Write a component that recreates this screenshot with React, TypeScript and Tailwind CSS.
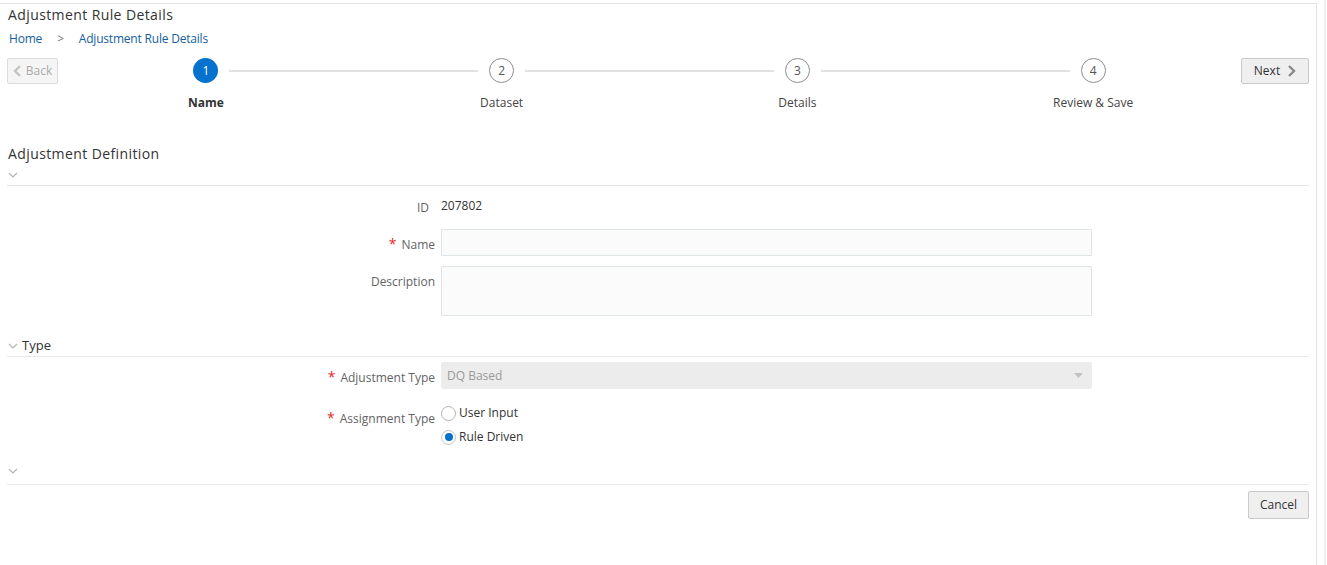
import React from "react"

const steps = ["Name", "Dataset", "Details", "Review & Save"]

const Chevron = ({ dir }: { dir: "left" | "right" }) => (
  <svg width="9" height="12" viewBox="0 0 9 12" className="shrink-0">
    <polyline
      points={dir === "left" ? "7,1 2,6 7,11" : "2,1 7,6 2,11"}
      fill="none"
      stroke={dir === "left" ? "#c4c4c4" : "#8a8a8a"}
      strokeWidth="2.4"
    />
  </svg>
)

const Caret = () => (
  <svg width="10" height="7" viewBox="0 0 10 7" className="shrink-0">
    <polyline points="1,1 5,5 9,1" fill="none" stroke="#b5b5b5" strokeWidth="1.2" />
  </svg>
)

const Label = ({ text, required }: { text: string; required?: boolean }) => (
  <span className="text-[12px] text-[#636363]">
    {required && <span className="mr-[5px] text-[14px] text-[#e0292c]">*</span>}
    {text}
  </span>
)

const App = () => {
  return (
    <div
      className="flex h-[565px] w-[1327px] bg-white text-[#333]"
      style={{ fontFamily: '"Open Sans", "Noto Sans", sans-serif' }}
    >
      <div className="mt-[3px] flex h-[562px] w-[1317px] flex-col border-t border-r border-[#e3e3e3] px-[7px]">
        <div className="mt-[1px] h-[20px] pl-[1px] text-[14px] leading-[20px] tracking-[0.4px] text-[#333]">
          Adjustment Rule Details
        </div>
        <div className="mt-[5px] flex h-[18px] items-center pl-[2px] text-[12px] tracking-[-0.2px] text-[#145e9f]">
          <span>Home</span>
          <span className="mx-[15px] text-[#777]">&gt;</span>
          <span>Adjustment Rule Details</span>
        </div>

        <div className="mt-[10px] flex items-start">
          <button className="flex h-[26px] w-[51px] items-center justify-center gap-[4px] rounded-[2px] border border-[#dcdcdc] bg-[#f5f5f5] text-[12px] text-[#aaa]">
            <Chevron dir="left" />
            Back
          </button>
          <div className="flex flex-1">
            {steps.map((s, i) => (
              <div key={s} className="flex flex-1 flex-col items-center">
                <div className="flex h-[25px] w-full items-center">
                  <div className={`h-[2px] flex-1 ${i === 0 ? "" : "bg-[#e2e2e2]"}`} />
                  {i === 0 ? (
                    <div className="mx-[11px] flex h-[25px] w-[25px] items-center justify-center rounded-full bg-[#0572ce] text-[12px] text-white">
                      1
                    </div>
                  ) : (
                    <div className="mx-[11px] flex h-[25px] w-[25px] items-center justify-center rounded-full border border-[#8d8d8d] bg-white text-[12px] text-[#555]">
                      {i + 1}
                    </div>
                  )}
                  <div className={`h-[2px] flex-1 ${i === steps.length - 1 ? "" : "bg-[#e2e2e2]"}`} />
                </div>
                <div
                  className={`mt-[12px] h-[16px] text-[12px] leading-[16px] ${
                    i === 0 ? "font-bold text-[#333]" : "text-[#444]"
                  }`}
                >
                  {s}
                </div>
              </div>
            ))}
          </div>
          <button className="flex h-[26px] w-[68px] items-center justify-center gap-[7px] rounded-[2px] border border-[#c9c9c9] bg-[#efefef] text-[12px] text-[#333]">
            Next
            <Chevron dir="right" />
          </button>
        </div>

        <div className="mt-[33px] h-[20px] pl-[1px] text-[14px] leading-[20px] tracking-[0.4px] text-[#333]">
          Adjustment Definition
        </div>
        <div className="mt-[6px] flex h-[10px] items-center pl-[1px]">
          <Caret />
        </div>
        <div className="mt-[5px] h-px bg-[#e4e8ea]" />

        <div className="flex flex-col">
          <div className="mt-[10px] flex h-[20px] items-center">
            <div className="w-[434px] pr-[12px] text-right">
              <Label text="ID" />
            </div>
            <div className="text-[12px] text-[#333]">207802</div>
          </div>
          <div className="mt-[13px] flex items-center">
            <div className="w-[434px] pr-[6px] text-right">
              <Label text="Name" required />
            </div>
            <input className="h-[27px] w-[651px] rounded-[1px] border border-[#dfe4e7] bg-[#fbfbfb] px-2 text-[12px] outline-none" />
          </div>
          <div className="mt-[10px] flex items-start">
            <div className="w-[434px] pt-[5px] pr-[6px] text-right leading-[18px]">
              <Label text="Description" />
            </div>
            <textarea className="h-[50px] w-[651px] resize-none rounded-[1px] border border-[#dfe4e7] bg-[#fbfbfb] px-2 text-[12px] outline-none" />
          </div>
        </div>

        <div className="mt-[21px] flex h-[18px] items-center gap-[4px] pl-[1px]">
          <Caret />
          <span className="text-[13px] text-[#333]">Type</span>
        </div>
        <div className="mt-[1px] h-px bg-[#e4e8ea]" />

        <div className="mt-[5px] flex items-center">
          <div className="w-[434px] pr-[6px] text-right">
            <Label text="Adjustment Type" required />
          </div>
          <div className="flex h-[27px] w-[651px] items-center justify-between rounded-[2px] bg-[#ececec] pr-[9px] pl-[6px] text-[12px] text-[#9a9a9a]">
            DQ Based
            <svg width="9" height="6" viewBox="0 0 9 6">
              <polygon points="0,0 9,0 4.5,5" fill="#c2c2c2" />
            </svg>
          </div>
        </div>

        <div className="mt-[15px] flex items-start">
          <div className="w-[434px] pt-[1px] pr-[6px] text-right">
            <Label text="Assignment Type" required />
          </div>
          <div className="flex flex-col gap-[6px] text-[12px] text-[#333]">
            <div className="flex h-[18px] items-center gap-[3px]">
              <span className="h-[15px] w-[15px] rounded-full border border-[#b3b3b3] bg-white" />
              User Input
            </div>
            <div className="flex h-[18px] items-center gap-[3px]">
              <span className="flex h-[15px] w-[15px] items-center justify-center rounded-full border border-[#c4c4c4] bg-white">
                <span className="h-[8px] w-[8px] rounded-full bg-[#0572ce]" />
              </span>
              Rule Driven
            </div>
          </div>
        </div>

        <div className="mt-[20px] flex h-[10px] items-center pl-[1px]">
          <Caret />
        </div>
        <div className="mt-[8px] h-px bg-[#e4e8ea]" />

        <div className="mt-[6px] flex justify-end">
          <button className="h-[28px] w-[61px] rounded-[2px] border border-[#c9c9c9] bg-[#efefef] text-[12px] text-[#333]">
            Cancel
          </button>
        </div>
      </div>
      <div className="ml-[7px] w-[2px] bg-[#f0f0f0]" />
    </div>
  )
}

export default App
